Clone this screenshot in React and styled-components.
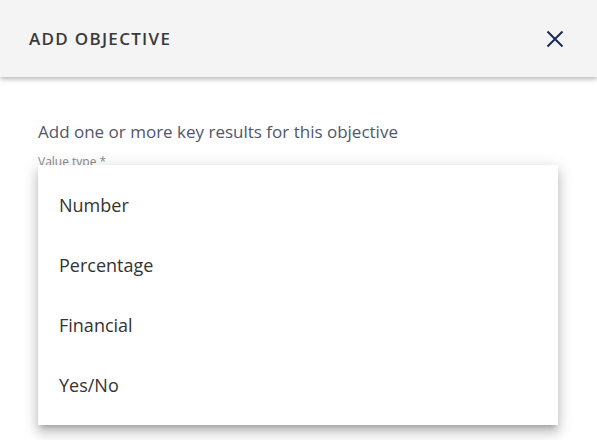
import React from "react";
import styled, { createGlobalStyle } from "styled-components";

const Global = createGlobalStyle`
  html, body { margin: 0; padding: 0; background: #fff; }
  body { font-family: "Open Sans", "Noto Sans", sans-serif; overflow: hidden; }
  * { box-sizing: border-box; }
`;

const Dialog = styled.div`
  width: 597px;
  height: 440px;
  background: #fff;
  display: flex;
  flex-direction: column;
`;

const Header = styled.header`
  height: 77px;
  flex: none;
  background: #f4f4f4;
  display: flex;
  align-items: center;
  justify-content: space-between;
  padding: 0 30px 0 29px;
  box-shadow: 0 2px 5px rgba(0, 0, 0, 0.3);
  position: relative;
  z-index: 1;
`;

const Title = styled.h1`
  margin: 0;
  font-size: 17px;
  font-weight: 600;
  color: #3a3a3a;
  letter-spacing: 1.3px;
`;

const CloseButton = styled.button`
  border: 0;
  background: none;
  padding: 0;
  width: 24px;
  height: 24px;
  display: flex;
  align-items: center;
  justify-content: center;
  cursor: pointer;
`;

const Body = styled.div`
  padding: 43px 38px 0;
  position: relative;
`;

const Intro = styled.p`
  margin: 0;
  font-size: 17px;
  line-height: 23px;
  color: #51566a;
`;

const Field = styled.div`
  margin-top: 11px;
  position: relative;
`;

const Label = styled.label`
  display: block;
  font-size: 12px;
  line-height: 16px;
  color: #8a8a8a;
`;

const Menu = styled.ul`
  position: absolute;
  top: 11px;
  left: 0;
  width: 520px;
  margin: 0;
  padding: 10px 0;
  list-style: none;
  background: #fff;
  box-shadow: 0 5px 5px -3px rgba(0, 0, 0, 0.2),
    0 8px 10px 1px rgba(0, 0, 0, 0.14), 0 3px 14px 2px rgba(0, 0, 0, 0.12);
`;

const Item = styled.li`
  height: 60px;
  display: flex;
  align-items: center;
  padding-left: 21px;
  font-size: 18px;
  color: #333;
`;

const options = ["Number", "Percentage", "Financial", "Yes/No"];

export default function App() {
  return (
    <>
      <Global />
      <Dialog>
        <Header>
          <Title>ADD OBJECTIVE</Title>
          <CloseButton aria-label="Close">
            <svg width="18" height="18" viewBox="0 0 18 18">
              <path d="M1.5 1.5 L16.5 16.5 M16.5 1.5 L1.5 16.5" stroke="#1b2a52" strokeWidth="2" fill="none" />
            </svg>
          </CloseButton>
        </Header>
        <Body>
          <Intro>Add one or more key results for this objective</Intro>
          <Field>
            <Label>Value type *</Label>
            <Menu>
              {options.map((o) => (
                <Item key={o}>{o}</Item>
              ))}
            </Menu>
          </Field>
        </Body>
      </Dialog>
    </>
  );
}
